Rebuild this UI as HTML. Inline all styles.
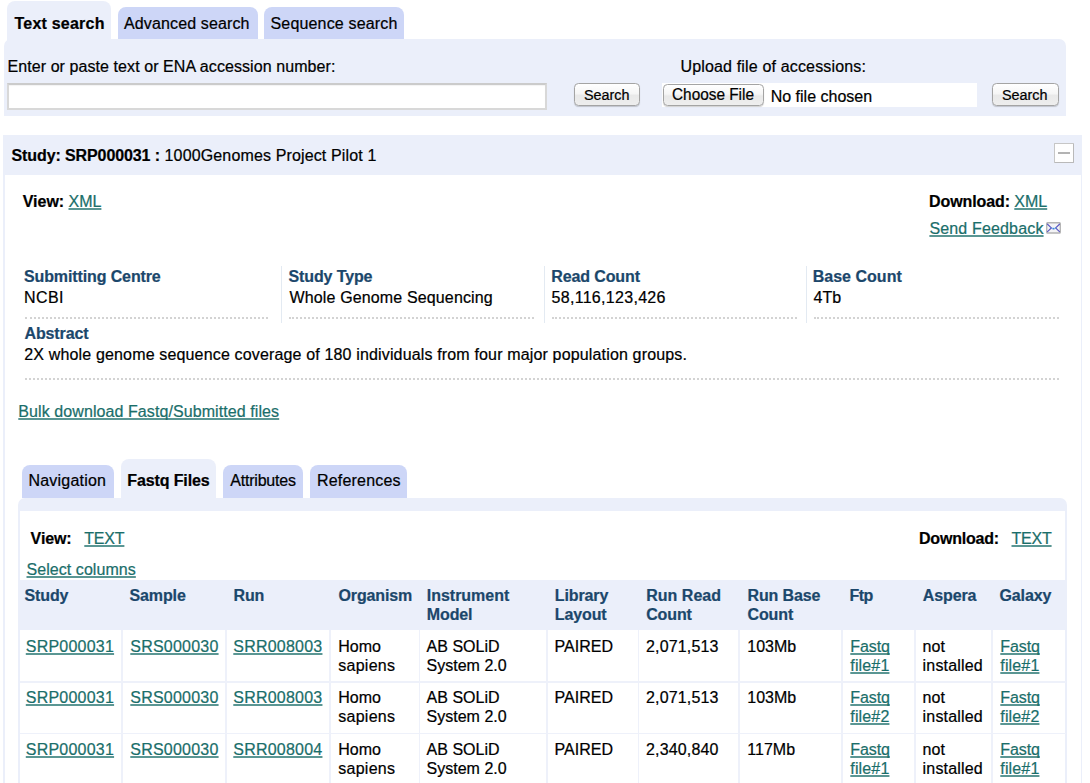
<!DOCTYPE html>
<html>
<head>
<meta charset="utf-8">
<title>Study: SRP000031</title>
<style>
html,body{margin:0;padding:0;background:#fff;}
body{width:1090px;height:783px;overflow:hidden;position:relative;font-family:"Liberation Sans",sans-serif;font-size:16px;line-height:18px;color:#000;}
a{color:#1a6e6a;text-decoration:underline;text-decoration-thickness:2px;text-underline-offset:1.3px;text-decoration-color:rgba(26,110,106,0.72);text-decoration-skip-ink:none;}
.abs{position:absolute;}
.t{position:absolute;white-space:nowrap;font-size:16px;line-height:18px;margin-top:1px;-webkit-text-stroke:0.22px currentColor;}
.t.nb{margin-top:0;}
.tab{position:absolute;box-sizing:border-box;background:#cdd6f7;border-radius:8px 8px 0 0;}
.tab.sel{background:#ebeffa;}
.lbl{color:#1b476b;font-weight:bold;}
.b{font-weight:bold;}
.btn{position:absolute;box-sizing:border-box;border:1px solid #a4a4a4;border-radius:4.5px;background:linear-gradient(#ffffff,#f6f6f6 45%,#e9e9e9 55%,#eeeeee);box-shadow:0 1px 1px rgba(0,0,0,.18);}
.dot{position:absolute;height:0;border-top:2px dotted #d3d3d3;}
.vs{position:absolute;width:1px;background:#e3eaf2;top:266px;height:57px;}
.cs{position:absolute;width:1.6px;background:#eef1fa;top:630px;height:154px;}
.rs{position:absolute;height:1.6px;background:#eef1fa;left:20px;width:1046px;}
</style>
</head>
<body>

<!-- top search tabs -->
<div class="tab sel" style="left:7px;top:1px;width:104px;height:40px;"></div>
<div class="tab" style="left:117.5px;top:7px;width:140px;height:32.3px;"></div>
<div class="tab" style="left:264px;top:7px;width:140.3px;height:32.3px;"></div>
<div class="t b" style="left:14.5px;top:14px;letter-spacing:0.22px;">Text search</div>
<div class="t" style="left:124px;top:14px;letter-spacing:0.13px;">Advanced search</div>
<div class="t" style="left:270.5px;top:14px;letter-spacing:0.17px;">Sequence search</div>

<!-- search panel -->
<div class="abs" style="left:3.5px;top:39.3px;width:1062.5px;height:77.1px;background:#ebeffa;border-radius:7px 7px 0 0;"></div>
<div class="t" style="left:7.5px;top:57px;letter-spacing:0.075px;">Enter or paste text or ENA accession number:</div>
<div class="abs" style="left:7.2px;top:83px;width:539.5px;height:26.9px;box-sizing:border-box;border:2px solid #d8d8d8;border-top:2px solid #cbcbcb;background:#fff;box-shadow:inset 0 1px 1px rgba(0,0,0,0.05);"></div>
<div class="btn" style="left:573.7px;top:83.3px;width:66.6px;height:22.4px;"></div>
<div class="t nb" style="left:583.5px;top:86px;font-size:15.5px;transform:scaleX(0.927);transform-origin:0 0;">Search</div>
<div class="t" style="left:680.5px;top:57px;letter-spacing:0.16px;">Upload file of accessions:</div>
<div class="abs" style="left:662px;top:83px;width:314.7px;height:24px;background:#fff;"></div>
<div class="btn" style="left:663px;top:83.5px;width:101.2px;height:22.2px;"></div>
<div class="t nb" style="left:672.3px;top:86px;font-size:15.6px;transform:scaleX(0.985);transform-origin:0 0;">Choose File</div>
<div class="t nb" style="left:770.7px;top:88px;font-size:16px;">No file chosen</div>
<div class="btn" style="left:992px;top:83.3px;width:66.6px;height:22.4px;"></div>
<div class="t nb" style="left:1001.8px;top:86px;font-size:15.5px;transform:scaleX(0.927);transform-origin:0 0;">Search</div>

<!-- study panel -->
<div class="abs" style="left:3.3px;top:135px;width:1078.7px;height:648px;background:#ebeffa;"></div>
<div class="abs" style="left:5px;top:174.7px;width:1075.8px;height:609px;background:#fff;"></div>
<div class="t" style="left:11.5px;top:145.5px;letter-spacing:0.14px;"><span class="b" style="letter-spacing:-0.1px;">Study: SRP000031 :</span> 1000Genomes Project Pilot 1</div>
<div class="abs" style="left:1054px;top:143px;width:19.8px;height:19.8px;box-sizing:border-box;border:1.4px solid #c6c6c6;border-right-color:#b9b9b9;border-bottom-color:#b9b9b9;border-radius:1px;background:#fefefe;"></div>
<div class="abs" style="left:1057.8px;top:152px;width:12.2px;height:2px;background:#b2b2b2;"></div>

<div class="t b" style="left:22.7px;top:192px;">View:</div>
<div class="t" style="left:68.5px;top:192px;"><a>XML</a></div>
<div class="t b" style="left:929px;top:192px;letter-spacing:-0.1px;">Download:</div>
<div class="t" style="left:1014.3px;top:192px;"><a>XML</a></div>
<div class="t" style="left:929.4px;top:218.5px;letter-spacing:0.16px;"><a>Send Feedback</a></div>
<svg class="abs" style="left:1045.7px;top:222.2px;" width="15.2" height="12" viewBox="0 0 16 12" preserveAspectRatio="none"><rect x="0.75" y="0.75" width="14.3" height="10.3" rx="0.8" fill="#f3f3f5" stroke="#b3b3b3" stroke-width="1.4"/><path d="M1.6 2.2 L5.6 5.9 L1.6 9.6 M14.2 2.2 L10.2 5.9 L14.2 9.6" fill="none" stroke="#5b57c2" stroke-width="1.25" stroke-linecap="round"/><ellipse cx="7.9" cy="6.7" rx="1.25" ry="0.9" fill="#3f86dd"/><circle cx="6" cy="6" r="0.7" fill="#5b8be0"/><circle cx="9.9" cy="6" r="0.7" fill="#4aa3df"/></svg>

<!-- meta -->
<div class="vs" style="left:281.3px;"></div>
<div class="vs" style="left:544.3px;"></div>
<div class="vs" style="left:805.7px;"></div>

<div class="t lbl" style="left:24px;top:267px;letter-spacing:-0.12px;">Submitting Centre</div>
<div class="t" style="left:24px;top:288px;letter-spacing:0.4px;">NCBI</div>
<div class="t lbl" style="left:288.5px;top:267px;letter-spacing:-0.12px;">Study Type</div>
<div class="t" style="left:289.5px;top:288px;letter-spacing:0.14px;">Whole Genome Sequencing</div>
<div class="t lbl" style="left:551.3px;top:267px;letter-spacing:-0.12px;">Read Count</div>
<div class="t" style="left:551.5px;top:288px;letter-spacing:0.3px;">58,116,123,426</div>
<div class="t lbl" style="left:812.7px;top:267px;letter-spacing:0.02px;">Base Count</div>
<div class="t" style="left:813.5px;top:288px;">4Tb</div>

<div class="dot" style="left:25px;top:317px;width:243px;"></div>
<div class="dot" style="left:289px;top:317px;width:245px;"></div>
<div class="dot" style="left:552px;top:317px;width:245px;"></div>
<div class="dot" style="left:814px;top:317px;width:245px;"></div>

<div class="t lbl" style="left:24.5px;top:324px;letter-spacing:-0.12px;">Abstract</div>
<div class="t" style="left:24.3px;top:345px;letter-spacing:0.155px;">2X whole genome sequence coverage of 180 individuals from four major population groups.</div>
<div class="dot" style="left:25px;top:378px;width:1034px;"></div>

<div class="t" style="left:18.3px;top:402px;letter-spacing:0.085px;"><a>Bulk download Fastq/Submitted files</a></div>

<!-- lower tabs -->
<div class="tab" style="left:21.7px;top:465.3px;width:92px;height:33px;"></div>
<div class="tab sel" style="left:120.5px;top:458.7px;width:95.5px;height:42px;"></div>
<div class="tab" style="left:222.7px;top:465.3px;width:80.6px;height:33px;"></div>
<div class="tab" style="left:310px;top:465.3px;width:97px;height:33px;"></div>
<div class="t" style="left:28.5px;top:471px;letter-spacing:0.2px;">Navigation</div>
<div class="t b" style="left:127.3px;top:471px;letter-spacing:-0.12px;">Fastq Files</div>
<div class="t" style="left:230.2px;top:471px;letter-spacing:-0.2px;">Attributes</div>
<div class="t" style="left:317px;top:471px;letter-spacing:0.2px;">References</div>

<div class="abs" style="left:18.3px;top:497.5px;width:1048.4px;height:286px;background:#ebeffa;border-radius:7px 7px 0 0;"></div>
<div class="abs" style="left:20px;top:510.6px;width:1045.2px;height:273px;background:#fff;"></div>

<div class="t b" style="left:30.6px;top:529px;letter-spacing:-0.1px;">View:</div>
<div class="t" style="left:84.3px;top:529px;letter-spacing:-0.2px;"><a>TEXT</a></div>
<div class="t b" style="left:919px;top:529px;letter-spacing:-0.2px;">Download:</div>
<div class="t" style="left:1011.5px;top:529px;letter-spacing:-0.2px;"><a>TEXT</a></div>
<div class="t" style="left:26.5px;top:559.5px;letter-spacing:0.06px;"><a>Select columns</a></div>

<!-- table -->
<div class="abs" style="left:19px;top:580px;width:1047.5px;height:50px;background:#ebeffa;"></div>
<!--TBL-->
<div class="cs" style="left:121.4px;"></div>
<div class="cs" style="left:225.1px;"></div>
<div class="cs" style="left:329.1px;"></div>
<div class="cs" style="left:418.8px;"></div>
<div class="cs" style="left:546.4px;"></div>
<div class="cs" style="left:637.8px;"></div>
<div class="cs" style="left:738.4px;"></div>
<div class="cs" style="left:841.1px;"></div>
<div class="cs" style="left:914.4px;"></div>
<div class="cs" style="left:991.1px;"></div>
<div class="rs" style="top:681px;"></div>
<div class="rs" style="top:732.7px;"></div>
<div class="t lbl" style="left:24.5px;top:586px;letter-spacing:-0.12px;">Study</div>
<div class="t lbl" style="left:129.5px;top:586px;letter-spacing:-0.12px;">Sample</div>
<div class="t lbl" style="left:233.5px;top:586px;letter-spacing:-0.12px;">Run</div>
<div class="t lbl" style="left:338.5px;top:586px;letter-spacing:-0.12px;">Organism</div>
<div class="t lbl" style="left:426.8px;top:586px;letter-spacing:-0.02px;">Instrument</div>
<div class="t lbl" style="left:426.8px;top:605px;letter-spacing:-0.12px;">Model</div>
<div class="t lbl" style="left:554.8px;top:586px;letter-spacing:-0.12px;">Library</div>
<div class="t lbl" style="left:554.8px;top:605px;letter-spacing:-0.12px;">Layout</div>
<div class="t lbl" style="left:646.2px;top:586px;letter-spacing:0.03px;">Run Read</div>
<div class="t lbl" style="left:646.2px;top:605px;letter-spacing:-0.12px;">Count</div>
<div class="t lbl" style="left:747.5px;top:586px;letter-spacing:-0.12px;">Run Base</div>
<div class="t lbl" style="left:747.5px;top:605px;letter-spacing:-0.12px;">Count</div>
<div class="t lbl" style="left:849.5px;top:586px;letter-spacing:-0.5px;">Ftp</div>
<div class="t lbl" style="left:922.8px;top:586px;letter-spacing:-0.12px;">Aspera</div>
<div class="t lbl" style="left:999.5px;top:586px;letter-spacing:-0.12px;">Galaxy</div>
<div class="t" style="left:25.8px;top:636.7px;letter-spacing:0.22px;"><a>SRP000031</a></div>
<div class="t" style="left:130.3px;top:636.7px;letter-spacing:0.22px;"><a>SRS000030</a></div>
<div class="t" style="left:233.3px;top:636.7px;letter-spacing:0.22px;"><a>SRR008003</a></div>
<div class="t" style="left:338.3px;top:636.7px;letter-spacing:0px;">Homo</div>
<div class="t" style="left:338.3px;top:655.7px;letter-spacing:0.25px;">sapiens</div>
<div class="t" style="left:426.6px;top:636.7px;letter-spacing:0px;">AB SOLiD</div>
<div class="t" style="left:426.6px;top:655.7px;letter-spacing:0px;">System 2.0</div>
<div class="t" style="left:554.6px;top:636.7px;letter-spacing:0px;">PAIRED</div>
<div class="t" style="left:646.0px;top:636.7px;letter-spacing:0.15px;">2,071,513</div>
<div class="t" style="left:747.3px;top:636.7px;letter-spacing:0px;">103Mb</div>
<div class="t" style="left:850.3px;top:636.7px;letter-spacing:-0.1px;"><a>Fastq</a></div>
<div class="t" style="left:850.3px;top:655.7px;letter-spacing:0.15px;"><a>file#1</a></div>
<div class="t" style="left:922.6px;top:636.7px;letter-spacing:0px;">not</div>
<div class="t" style="left:922.6px;top:655.7px;letter-spacing:0.18px;">installed</div>
<div class="t" style="left:1000.3px;top:636.7px;letter-spacing:-0.1px;"><a>Fastq</a></div>
<div class="t" style="left:1000.3px;top:655.7px;letter-spacing:0.15px;"><a>file#1</a></div>
<div class="t" style="left:25.8px;top:688.4px;letter-spacing:0.22px;"><a>SRP000031</a></div>
<div class="t" style="left:130.3px;top:688.4px;letter-spacing:0.22px;"><a>SRS000030</a></div>
<div class="t" style="left:233.3px;top:688.4px;letter-spacing:0.22px;"><a>SRR008003</a></div>
<div class="t" style="left:338.3px;top:688.4px;letter-spacing:0px;">Homo</div>
<div class="t" style="left:338.3px;top:707.4px;letter-spacing:0.25px;">sapiens</div>
<div class="t" style="left:426.6px;top:688.4px;letter-spacing:0px;">AB SOLiD</div>
<div class="t" style="left:426.6px;top:707.4px;letter-spacing:0px;">System 2.0</div>
<div class="t" style="left:554.6px;top:688.4px;letter-spacing:0px;">PAIRED</div>
<div class="t" style="left:646.0px;top:688.4px;letter-spacing:0.15px;">2,071,513</div>
<div class="t" style="left:747.3px;top:688.4px;letter-spacing:0px;">103Mb</div>
<div class="t" style="left:850.3px;top:688.4px;letter-spacing:-0.1px;"><a>Fastq</a></div>
<div class="t" style="left:850.3px;top:707.4px;letter-spacing:0.15px;"><a>file#2</a></div>
<div class="t" style="left:922.6px;top:688.4px;letter-spacing:0px;">not</div>
<div class="t" style="left:922.6px;top:707.4px;letter-spacing:0.18px;">installed</div>
<div class="t" style="left:1000.3px;top:688.4px;letter-spacing:-0.1px;"><a>Fastq</a></div>
<div class="t" style="left:1000.3px;top:707.4px;letter-spacing:0.15px;"><a>file#2</a></div>
<div class="t" style="left:25.8px;top:740.1px;letter-spacing:0.22px;"><a>SRP000031</a></div>
<div class="t" style="left:130.3px;top:740.1px;letter-spacing:0.22px;"><a>SRS000030</a></div>
<div class="t" style="left:233.3px;top:740.1px;letter-spacing:0.22px;"><a>SRR008004</a></div>
<div class="t" style="left:338.3px;top:740.1px;letter-spacing:0px;">Homo</div>
<div class="t" style="left:338.3px;top:759.1px;letter-spacing:0.25px;">sapiens</div>
<div class="t" style="left:426.6px;top:740.1px;letter-spacing:0px;">AB SOLiD</div>
<div class="t" style="left:426.6px;top:759.1px;letter-spacing:0px;">System 2.0</div>
<div class="t" style="left:554.6px;top:740.1px;letter-spacing:0px;">PAIRED</div>
<div class="t" style="left:646.0px;top:740.1px;letter-spacing:0.15px;">2,340,840</div>
<div class="t" style="left:747.3px;top:740.1px;letter-spacing:0px;">117Mb</div>
<div class="t" style="left:850.3px;top:740.1px;letter-spacing:-0.1px;"><a>Fastq</a></div>
<div class="t" style="left:850.3px;top:759.1px;letter-spacing:0.15px;"><a>file#1</a></div>
<div class="t" style="left:922.6px;top:740.1px;letter-spacing:0px;">not</div>
<div class="t" style="left:922.6px;top:759.1px;letter-spacing:0.18px;">installed</div>
<div class="t" style="left:1000.3px;top:740.1px;letter-spacing:-0.1px;"><a>Fastq</a></div>
<div class="t" style="left:1000.3px;top:759.1px;letter-spacing:0.15px;"><a>file#1</a></div>
<!--/TBL-->

</body>
</html>
